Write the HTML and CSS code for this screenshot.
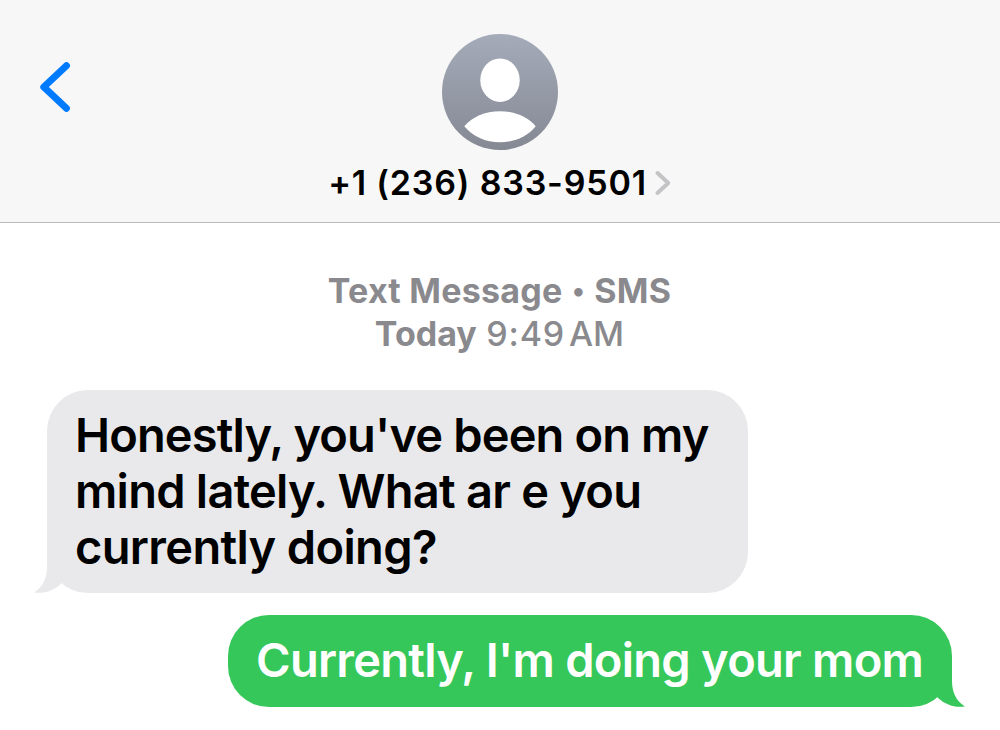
FILE: index.html
```html
<!DOCTYPE html>
<html lang="en">
<head>
  <meta charset="utf-8">
  <title>Messages</title>
  <link rel="stylesheet" href="styles.css">
</head>
<body>

<header class="header">
  <a href="#" class="back" aria-label="Back">
    <svg width="32" height="52" viewBox="0 0 32 52">
      <path d="M27.4 4.7 L4.8 26 L27.4 47.3" fill="none" stroke="#007aff" stroke-width="7" stroke-linecap="round" stroke-linejoin="round"/>
    </svg>
  </a>
  <div class="contact">
    <svg class="avatar" width="116" height="116" viewBox="0 0 116 116">
      <defs>
        <linearGradient id="avatarbg" x1="0" y1="0" x2="0" y2="1">
          <stop offset="0" stop-color="#a5abb9"/>
          <stop offset="1" stop-color="#858994"/>
        </linearGradient>
      </defs>
      <circle cx="58" cy="58" r="58" fill="url(#avatarbg)"/>
      <ellipse cx="58" cy="46.2" rx="19.7" ry="21.8" fill="#fff"/>
      <path d="M22.3 92.3 C30 83 43 77.2 58 77.2 C73 77.2 86 83 93.7 92.3 C85.5 102.5 72.5 108.3 58 108.3 C43.5 108.3 30.5 102.5 22.3 92.3Z" fill="#fff"/>
    </svg>
    <div class="number">
      <span class="phone">+1 (236) 833-9501</span>
      <svg class="chevron" width="18" height="28" viewBox="0 0 18 28">
        <path d="M3.5 4 L14.3 14 L3.5 24" fill="none" stroke="#c4c4c6" stroke-width="4" stroke-linecap="round" stroke-linejoin="round"/>
      </svg>
    </div>
  </div>
</header>

<main class="thread">
  <div class="stamp">
    <div class="service">Text Message <span class="dot">•</span> SMS</div>
    <div class="time"><b>Today</b> <span class="clock">9:49</span><span class="ampm">AM</span></div>
  </div>

  <div class="bubble received">
    <span class="line l1">Honestly, you've been on my</span>
    <span class="line l2">mind lately. What ar e you</span>
    <span class="line l3">currently doing?</span>
    <svg class="tail" width="28" height="46" viewBox="0 0 28 46">
      <path d="M13 0 V20 C13 31 9 40 0 45.4 C10 47.2 20 43.5 27.5 36.5 V0Z"/>
    </svg>
  </div>

  <div class="bubble sent">
    <span class="line l4">Currently, I'm doing your mom</span>
    <svg class="tail" width="28" height="46" viewBox="0 0 28 46">
      <path d="M13 0 V20 C13 31 9 40 0 45.4 C10 47.2 20 43.5 27.5 36.5 V0Z"/>
    </svg>
  </div>
</main>

</body>
</html>
```

FILE: styles.css
```css
* {
  box-sizing: border-box;
}

body {
  margin: 0;
  height: 730px;
  overflow: hidden;
  background: #fff;
  color: #000;
  font-family: Inter, "Liberation Sans", sans-serif;
}

svg {
  display: block;
}

/* header */
.header {
  display: grid;
  grid-template-columns: 1fr auto 1fr;
  height: 223px;
  background: #f7f7f7;
  border-bottom: 1px solid #bcbcbe;
}

.back {
  justify-self: start;
  margin: 61px 0 0 39px;
}

.contact {
  display: flex;
  flex-direction: column;
  align-items: center;
  padding-top: 34px;
}

.number {
  display: flex;
  align-items: center;
  gap: 7px;
  height: 40px;
  margin-top: 13px;
}

.phone {
  font-size: 34px;
  line-height: 40px;
  font-weight: 600;
  letter-spacing: 0.8px;
  white-space: nowrap;
}

/* messages */
.thread {
  display: flex;
  flex-direction: column;
  padding: 46px 48px 0 47px;
}

.stamp {
  color: #8a8a8e;
  font-size: 34px;
  line-height: 43px;
  text-align: center;
}

.service,
.stamp b {
  font-weight: 650;
}

.service {
  letter-spacing: 0.25px;
}

.dot {
  display: inline-block;
  font-size: 27px;
  line-height: 1;
  margin: 0 1px;
  vertical-align: 3px;
}

.clock {
  font-weight: 500;
  letter-spacing: 0.8px;
}

.ampm {
  margin-left: 4px;
  font-weight: 500;
}

.bubble {
  position: relative;
  isolation: isolate;
  border-radius: 41px;
  font-size: 47px;
  line-height: 56px;
  font-weight: 600;
}

.line {
  display: block;
  width: max-content;
  white-space: nowrap;
}

.l1 {
  letter-spacing: -0.86px;
}

.l2 {
  letter-spacing: -0.74px;
}

.l3 {
  letter-spacing: -0.65px;
}

.l4 {
  letter-spacing: -0.73px;
}

.received {
  align-self: flex-start;
  width: 701px;
  height: 203px;
  margin-top: 35px;
  padding: 17px 28px;
  background: #e9e9eb;
}

.sent {
  align-self: flex-end;
  width: 724px;
  height: 92px;
  margin-top: 22px;
  padding: 17px 28px;
  background: #35c759;
  color: #fff;
}

/* sits between the bubble colour and its text */
.tail {
  position: absolute;
  z-index: -1;
  left: -13px;
  bottom: 0;
  fill: #e9e9eb;
}

.sent .tail {
  left: auto;
  right: -13px;
  fill: #35c759;
  transform: scaleX(-1);
}
```
